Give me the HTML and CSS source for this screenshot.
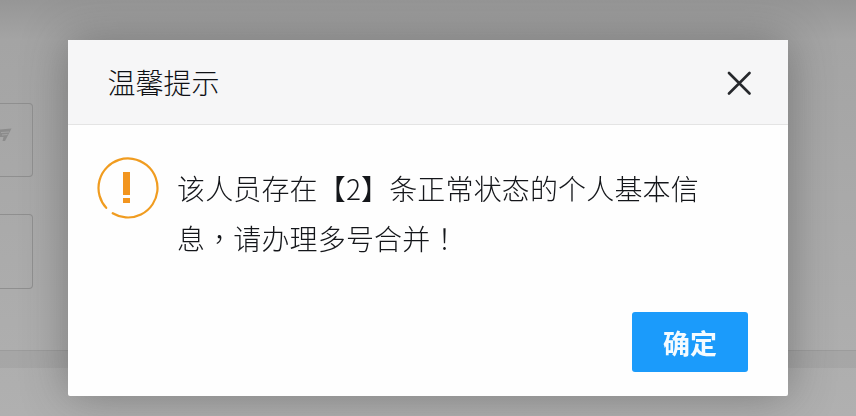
FILE: index.html
```html
<!DOCTYPE html>
<html lang="zh-CN">
<head>
<meta charset="utf-8">
<title>温馨提示</title>
<link rel="stylesheet" href="styles.css">
</head>
<body>
<div class="page">
  <div class="page-box">
    <svg class="page-icon" viewBox="0 0 12 14" width="12" height="14"><path d="M0 1.5 L11.5 0.5 L5 13 L2.5 13 L3.5 9 L0 9z" fill="#8c8c8c"/><path d="M1 4.5 L9 4 M2 7 L7.5 6.5" stroke="#a4a4a4" stroke-width="1"/></svg>
  </div>
  <div class="page-box second"></div>
  <div class="page-band"></div>
</div>
<div class="overlay">
  <div class="dialog">
    <div class="dialog-header">
      <span class="dialog-title">温馨提示</span>
      <svg class="close" viewBox="0 0 24 24" width="24" height="24"><path d="M2 2 L22.5 22.5 M22.5 2 L2 22.5" stroke="#26282c" stroke-width="2.6" fill="none" stroke-linecap="round"/></svg>
    </div>
    <div class="dialog-body">
      <svg class="warn" viewBox="0 0 62 62" width="62" height="62">
        <path d="M9.2 50.85 A29.5 29.5 0 1 1 15.7 56.2" fill="none" stroke="#f09c20" stroke-width="2.2" stroke-linecap="round"/>
        <rect x="26" y="15" width="7" height="23" fill="#f2951f"/>
        <rect x="26" y="41" width="7" height="5" fill="#f2951f"/>
      </svg>
      <p class="message">该人员存在【2】条正常状态的个人基本信<br>息<span class="punct" lang="zh-TW">，</span>请办理多号合并<span class="punct" lang="zh-TW">！</span></p>
    </div>
    <div class="dialog-footer">
      <button class="ok" type="button">确定</button>
    </div>
  </div>
</div>
</body>
</html>
```

FILE: styles.css
```css
html, body {
  margin: 0;
  padding: 0;
  height: 100%;
  overflow: hidden;
}
body {
  font-family: "Noto Sans CJK SC", "Liberation Sans", sans-serif;
  background: linear-gradient(180deg, #969696 0, #a4a4a4 40px, #b0b0b0 100%);
}
.page {
  display: flex;
  flex-direction: column;
  padding-top: 103px;
  height: 416px;
  box-sizing: border-box;
}
.page-box {
  width: 33px;
  height: 74px;
  box-sizing: border-box;
  border: 1px solid #8f8f8f;
  border-left: 0;
  border-radius: 0 4px 4px 0;
  padding-top: 24px;
}
.page-icon {
  display: block;
}
.page-box.second {
  margin-top: 37px;
  height: 75px;
}
.page-band {
  margin-top: 61px;
  height: 17px;
  background: rgba(120, 120, 120, 0.14);
  border-top: 1px solid rgba(120, 120, 120, 0.2);
}
.overlay {
  position: fixed;
  inset: 0;
  padding: 40px 0 0 68px;
}
.dialog {
  width: 720px;
  height: 356px;
  background: #fefefe;
  border-radius: 2px;
  box-shadow: 0 0 46px rgba(50, 50, 50, 0.42);
  display: flex;
  flex-direction: column;
}
.dialog-header {
  height: 85px;
  box-sizing: border-box;
  flex: none;
  background: #f6f6f7;
  border-bottom: 1px solid #e4e4e4;
  display: flex;
  align-items: center;
  justify-content: space-between;
  padding: 0 37px 0 39.5px;
}
.dialog-title {
  font-size: 28px;
  font-weight: 300;
  line-height: 40px;
  color: #0e1014;
}
.close {
  display: block;
  margin-top: 2px;
}
.dialog-body {
  flex: 1;
  display: flex;
  align-items: flex-start;
  padding: 32px 88px 0 29px;
}
.warn {
  flex: none;
  display: block;
}
.message {
  margin: 6px 0 0 18px;
  font-size: 28px;
  font-weight: 300;
  line-height: 50px;
  letter-spacing: 0.15px;
  color: #14161a;
}
.punct {
  font-family: "Noto Sans CJK TC", sans-serif;
}
.dialog-footer {
  display: flex;
  justify-content: flex-end;
  padding: 0 40px 24px 0;
}
.ok {
  width: 116px;
  height: 60px;
  border: 0;
  border-radius: 3px;
  background: #1b9bfb;
  color: #f4fbff;
  font-family: inherit;
  font-size: 27px;
  font-weight: 700;
  padding: 0;
}
```
